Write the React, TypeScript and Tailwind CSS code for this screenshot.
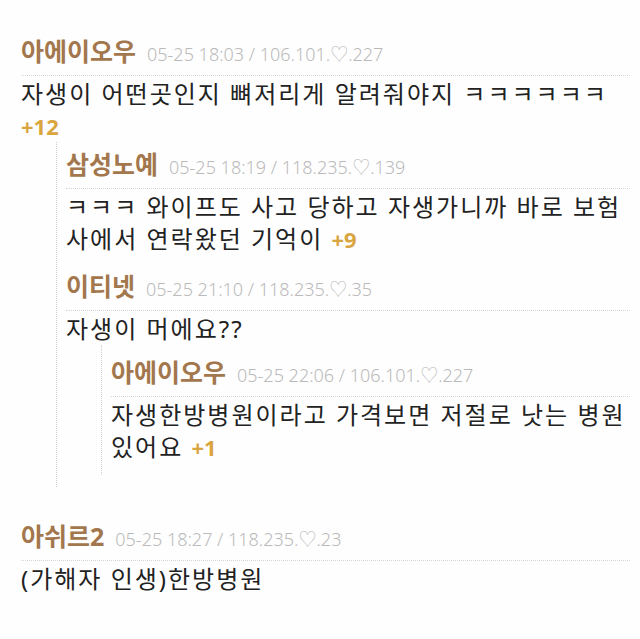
import React from "react";

type C = {
  name: string;
  meta: string;
  pt: string;
  lines: React.ReactNode;
  replies?: C[];
};

const Plus = ({ n }: { n: string }) => (
  <span className="text-[22px] font-bold tracking-normal text-[#d9a53f]">{n}</span>
);

const data: C[] = [
  {
    name: "아에이오우",
    meta: "05-25 18:03 / 106.101.♡.227",
    pt: "pt-[6px]",
    lines: (
      <>
        자생이 어떤곳인지 뼈저리게 알려줘야지 ㅋㅋㅋㅋㅋㅋ <Plus n="+12" />
      </>
    ),
    replies: [
      {
        name: "삼성노예",
        meta: "05-25 18:19 / 118.235.♡.139",
        pt: "pt-[7px]",
        lines: (
          <>
            ㅋㅋㅋ 와이프도 사고 당하고 자생가니까 바로 보험사에서 연락왔던 기억이 <Plus n="+9" />
          </>
        ),
      },
      {
        name: "이티넷",
        meta: "05-25 21:10 / 118.235.♡.35",
        pt: "pt-[4px]",
        lines: <>자생이 머에요??</>,
        replies: [
          {
            name: "아에이오우",
            meta: "05-25 22:06 / 106.101.♡.227",
            pt: "pt-[12px]",
            lines: (
              <>
                자생한방병원이라고 가격보면 저절로 낫는 병원 있어요 <Plus n="+1" />
              </>
            ),
          },
        ],
      },
    ],
  },
  {
    name: "아쉬르2",
    meta: "05-25 18:27 / 118.235.♡.23",
    pt: "pt-[6px]",
    lines: <>(가해자 인생)한방병원</>,
  },
];

function Comment({ c }: { c: C }) {
  return (
    <div className={`${c.pt} pb-[12px]`}>
      <div className="flex items-baseline gap-[11px] border-b border-dotted border-[#d6d6d6] pb-[6px] leading-[30px]">
        <span className="text-[25px] font-bold text-[#a3774d]">{c.name}</span>
        <span className="text-[18px] font-light text-[#bababa]">{c.meta}</span>
      </div>
      <div className="pt-[2px] text-[24px] leading-[32px] tracking-[2px] text-[#222222]">{c.lines}</div>
      {c.replies && (
        <div className="ml-[35px] border-l border-dotted border-[#d0d0d0] pl-[9px]">
          {c.replies.map((r, i) => (
            <Comment key={i} c={r} />
          ))}
        </div>
      )}
    </div>
  );
}

export default function App() {
  return (
    <div
      className="flex min-h-[639px] w-[640px] flex-col gap-[16px] bg-[#fefefe] pl-[21px] pr-[10px] pt-[30px]"
      style={{ fontFamily: '"Noto Sans", "Noto Sans CJK KR", sans-serif' }}
    >
      {data.map((c, i) => (
        <Comment key={i} c={c} />
      ))}
    </div>
  );
}
